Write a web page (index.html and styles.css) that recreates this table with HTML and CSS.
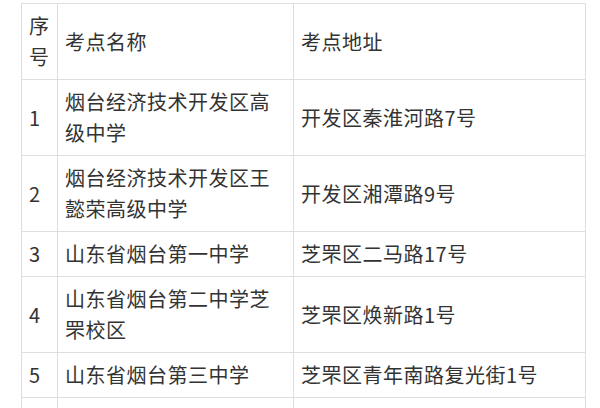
FILE: index.html
```html
<!DOCTYPE html>
<html lang="zh-CN">
<head>
<meta charset="utf-8">
<title>考点</title>
<link rel="stylesheet" href="styles.css">
</head>
<body>
<div class="page">
<table class="sites">
  <colgroup>
    <col class="c-no">
    <col class="c-name">
    <col class="c-addr">
  </colgroup>
  <tr><td>序号</td><td>考点名称</td><td>考点地址</td></tr>
  <tr><td>1</td><td>烟台经济技术开发区高级中学</td><td>开发区秦淮河路7号</td></tr>
  <tr><td>2</td><td>烟台经济技术开发区王懿荣高级中学</td><td>开发区湘潭路9号</td></tr>
  <tr><td>3</td><td>山东省烟台第一中学</td><td>芝罘区二马路17号</td></tr>
  <tr><td>4</td><td>山东省烟台第二中学芝罘校区</td><td>芝罘区焕新路1号</td></tr>
  <tr><td>5</td><td>山东省烟台第三中学</td><td>芝罘区青年南路复光街1号</td></tr>
  <tr><td>&nbsp;</td><td>&nbsp;</td><td>&nbsp;</td></tr>
</table>
</div>
</body>
</html>
```
FILE: styles.css
```css
html, body {
  margin: 0;
  padding: 0;
  background: #ffffff;
  overflow: hidden;
}
.page {
  padding: 3px 0 0 21px;
}
.sites {
  border-collapse: collapse;
  table-layout: fixed;
  width: 564px;
  font-family: "Noto Sans CJK SC", "Noto Sans", sans-serif;
  font-size: 20px;
  letter-spacing: 0.5px;
  line-height: 31px;
  color: #333333;
}
.c-no { width: 36px; }
.c-name { width: 236px; }
.c-addr { width: 292px; }
.sites td {
  border: 1px solid #dedede;
  padding: 6px 7px 7px 7px;
  vertical-align: middle;
  word-break: break-all;
}
```
